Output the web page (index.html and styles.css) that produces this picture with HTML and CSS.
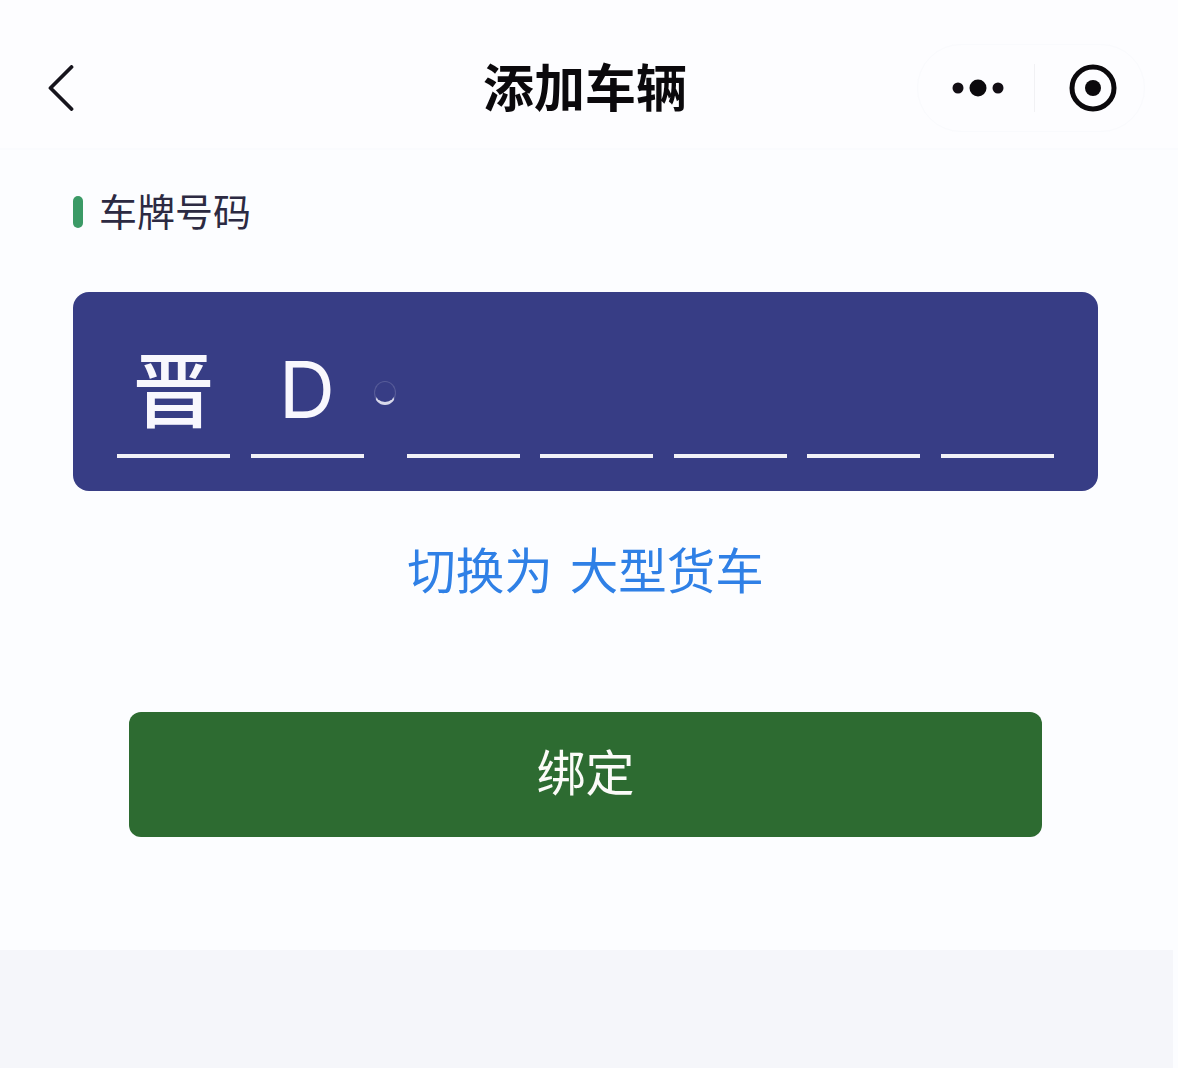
FILE: index.html
```html
<!DOCTYPE html>
<html lang="zh-CN">
<head>
    <meta charset="UTF-8">
    <meta name="viewport" content="width=device-width, initial-scale=1.0">
    <title>添加车辆</title>
    <link rel="stylesheet" href="styles.css">
</head>
<body>
    <div class="page">
        <header class="nav-bar">
            <svg class="back-icon" width="26" height="46" viewBox="0 0 26 46">
                <path d="M23.5 2 L2.5 23 L23.5 44" fill="none" stroke="#16141c" stroke-width="3.8" stroke-linecap="round" stroke-linejoin="round"/>
            </svg>
            <h1 class="nav-title">添加车辆</h1>
            <div class="capsule">
                <svg class="more-icon" width="52" height="18" viewBox="0 0 52 18">
                    <circle cx="6" cy="9" r="5.5" fill="#120e14"/>
                    <circle cx="26" cy="9" r="8.5" fill="#0b090c"/>
                    <circle cx="46" cy="9" r="5.5" fill="#120e14"/>
                </svg>
                <span class="capsule-line"></span>
                <svg class="target-icon" width="48" height="48" viewBox="0 0 48 48">
                    <circle cx="24" cy="24" r="21" fill="none" stroke="#0b090c" stroke-width="5"/>
                    <circle cx="24" cy="24" r="8" fill="#0b090c"/>
                </svg>
            </div>
        </header>

        <main class="content">
            <div class="section-title">
                <span class="section-mark"></span>
                <span class="section-text">车牌号码</span>
            </div>

            <div class="plate">
                <div class="plate-cell"><span class="plate-char plate-cn">晋</span></div>
                <div class="plate-cell"><span class="plate-char">D</span></div>
                <div class="plate-dot"></div>
                <div class="plate-cell"></div>
                <div class="plate-cell"></div>
                <div class="plate-cell"></div>
                <div class="plate-cell"></div>
                <div class="plate-cell"></div>
            </div>

            <a class="switch-link">切换为 大型货车</a>

            <button class="bind-button">绑定</button>
        </main>

        <footer class="bottom-area"></footer>
    </div>
</body>
</html>
```

FILE: styles.css
```css
* {
    margin: 0;
    padding: 0;
    box-sizing: border-box;
}

body {
    font-family: "Noto Sans CJK SC", "Noto Sans", sans-serif;
    background-color: #fcfdff;
}

.page {
    display: flex;
    flex-direction: column;
    height: 1068px;
    overflow: hidden;
}

.nav-bar {
    display: grid;
    grid-template-columns: 1fr auto 1fr;
    align-items: center;
    height: 150px;
    padding: 28px 33px 0 25px;
    background-color: #fdfdff;
    border-bottom: 2px solid #fafbfe;
}

.back-icon {
    margin-left: 23px;
}

.nav-title {
    font-size: 51px;
    line-height: 72px;
    font-weight: 700;
    color: #0b090c;
    margin-bottom: 6px;
}

.capsule {
    display: flex;
    align-items: center;
    justify-self: end;
    width: 228px;
    height: 88px;
    padding-left: 34px;
    border: 1px solid #f9fafd;
    border-radius: 44px;
}

.capsule-line {
    width: 1px;
    height: 48px;
    margin: 0 34px 0 30px;
    background-color: #f1f1f4;
}

.content {
    flex: 1;
    padding: 42px 80px 0 73px;
}

.section-title {
    display: flex;
    align-items: center;
    height: 40px;
}

.section-mark {
    width: 10px;
    height: 32px;
    margin-right: 16px;
    border-radius: 5px;
    background-color: #3b9a66;
}

.section-text {
    font-size: 38px;
    line-height: 40px;
    margin-bottom: 4px;
    color: #2c2a42;
}

.plate {
    display: flex;
    gap: 20.5px;
    height: 199px;
    margin-top: 60px;
    padding: 0 44px;
    border-radius: 16px;
    background-color: #373d85;
}

.plate-cell {
    display: flex;
    flex-shrink: 0;
    justify-content: center;
    align-items: flex-end;
    width: 113px;
    height: 166px;
    border-bottom: 4px solid #f1f1f7;
}

.plate-char {
    color: #f8f7fd;
    font-family: Inter, sans-serif;
    font-size: 78px;
    line-height: 100px;
    margin-bottom: 14px;
}

.plate-cn {
    font-family: "Noto Sans CJK SC", sans-serif;
    font-size: 82px;
    line-height: 110px;
    font-weight: 500;
    margin-bottom: 13px;
}

.plate-dot {
    flex-shrink: 0;
    width: 22px;
    height: 24px;
    margin: 89px -10px 0;
    border-radius: 50%;
    border: 1px solid rgba(255, 255, 255, 0.16);
    border-bottom: 3px solid #d8d9ea;
}

.switch-link {
    display: block;
    margin-top: 41px;
    text-align: center;
    font-size: 48.5px;
    line-height: 72px;
    word-spacing: 6px;
    color: #2f80e6;
}

.bind-button {
    display: block;
    width: 913px;
    height: 125px;
    margin: 108px 0 0 56px;
    padding-bottom: 10px;
    border: none;
    border-radius: 12px;
    background-color: #2d6b31;
    color: #fbfbf8;
    font-family: inherit;
    font-size: 49px;
}

.bottom-area {
    height: 118px;
    margin-right: 5px;
    background-color: #f5f6fa;
}
```
